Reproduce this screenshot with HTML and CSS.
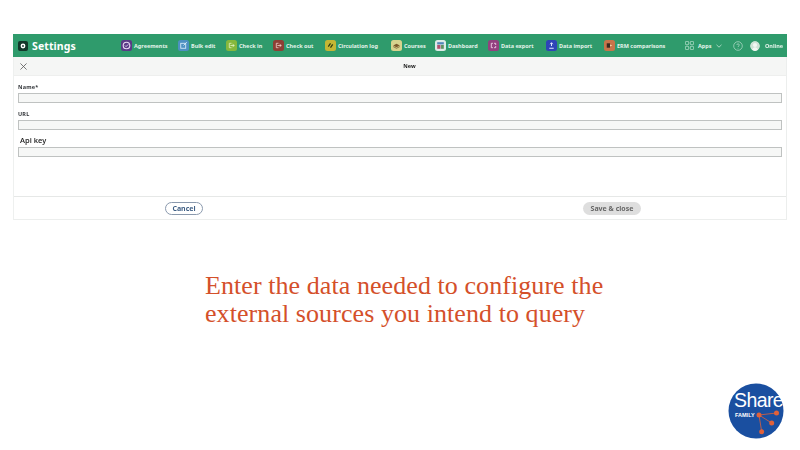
FILE: index.html
```html
<!DOCTYPE html>
<html lang="en">
<head>
<meta charset="utf-8">
<title>Settings</title>
<link rel="stylesheet" href="styles.css">
</head>
<body>
<main class="slide">
  <section class="app">
    <header class="topbar">
      <div class="brand">
        <span class="brand-icon"><svg viewBox="0 0 10 10" width="10" height="10"><circle cx="5" cy="5" r="2.4" fill="#fff"/><circle cx="5" cy="5" r="0.9" fill="#12372a"/></svg></span>
        <span class="brand-name">Settings</span>
      </div>
      <nav class="nav">
        <a class="nav-item w-agr"><span class="ico c-agr"><svg viewBox="0 0 10 10"><circle cx="5" cy="5" r="3" fill="none" stroke="#e9d9f5" stroke-width="1"/><path d="M3.6 5l1 1 2-2" fill="none" stroke="#e9d9f5" stroke-width=".8"/></svg></span>Agreements</a>
        <a class="nav-item w-bulk"><span class="ico c-bulk"><svg viewBox="0 0 10 10"><rect x="2.5" y="3" width="4.5" height="4.5" fill="none" stroke="#d8ecfa" stroke-width=".8"/><path d="M5 5l3-3" stroke="#d8ecfa" stroke-width=".8"/></svg></span>Bulk edit</a>
        <a class="nav-item w-in"><span class="ico c-in"><svg viewBox="0 0 10 10"><path d="M5 3H3v4h2M4 5h3.500M6 3.800L7.500 5 6 6.200" fill="none" stroke="#e8f5c8" stroke-width=".7"/></svg></span>Check in</a>
        <a class="nav-item w-out"><span class="ico c-out"><svg viewBox="0 0 10 10"><path d="M5 3H3v4h2M4 5h3.500M6 3.800L7.500 5 6 6.200" fill="none" stroke="#f5d8d0" stroke-width=".7"/></svg></span>Check out</a>
        <a class="nav-item w-circ"><span class="ico c-circ"><svg viewBox="0 0 10 10"><path d="M3 6l2-3M7 4L5 7" fill="none" stroke="#2d3a10" stroke-width="1.100"/></svg></span>Circulation log</a>
        <a class="nav-item w-cour"><span class="ico c-cour"><svg viewBox="0 0 10 10"><path d="M2 5l3-1.500L8 5 5 6.500z" fill="#7b5a2c"/><path d="M2 6l3 1.500L8 6" fill="none" stroke="#7b5a2c" stroke-width=".7"/></svg></span>Courses</a>
        <a class="nav-item w-dash"><span class="ico c-dash"><svg viewBox="0 0 10 10"><rect x="2" y="2" width="6" height="2" fill="#4f86b8"/><rect x="2" y="4.500" width="3" height="3.500" fill="#b0506e"/><rect x="5.500" y="4.500" width="2.500" height="3.500" fill="#5f8f5f"/></svg></span>Dashboard</a>
        <a class="nav-item w-exp"><span class="ico c-exp"><svg viewBox="0 0 10 10"><path d="M3 3h1.500M5.500 3H7v1.500M3 3v4h1.500M5.500 7H7V5.500" fill="none" stroke="#f2d5ea" stroke-width=".8"/></svg></span>Data export</a>
        <a class="nav-item w-imp"><span class="ico c-imp"><svg viewBox="0 0 10 10"><path d="M5 2.500v3M3.800 3.800L5 2.500l1.200 1.300M3 7.500h4" fill="none" stroke="#e3e8ff" stroke-width=".9"/></svg></span>Data import</a>
        <a class="nav-item w-erm"><span class="ico c-erm"><svg viewBox="0 0 10 10"><rect x="2.500" y="3" width="3" height="4" fill="#3c2a20"/><path d="M5.500 4l2 1-2 1z" fill="#f3d9a8"/></svg></span>ERM comparisons</a>
      </nav>
      <div class="tools">
        <span class="apps"><svg class="apps-grid" viewBox="0 0 11 11"><g fill="none" stroke="#d6efe2" stroke-width=".8"><rect x=".5" y=".5" width="4" height="4" rx="1"/><rect x="6.500" y=".5" width="4" height="4" rx="1"/><rect x=".5" y="6.500" width="4" height="4" rx="1"/><rect x="6.500" y="6.500" width="4" height="4" rx="1"/></g></svg>Apps<svg class="apps-caret" viewBox="0 0 6 4"><path d="M.5.800L3 3.200 5.500.800" fill="none" stroke="#d6efe2" stroke-width=".7"/></svg></span>
        <span class="help"><svg viewBox="0 0 10 10" width="10" height="10"><circle cx="5" cy="5" r="4.300" fill="none" stroke="#cfe9db" stroke-width=".6"/><path d="M3.800 4c0-1.600 2.500-1.600 2.500 0C6.300 5 5 5 5 6" fill="none" stroke="#cfe9db" stroke-width=".6"/><circle cx="5" cy="7.200" r=".4" fill="#cfe9db"/></svg></span>
        <span class="avatar"><svg viewBox="0 0 10 10" width="10" height="10"><circle cx="5" cy="5" r="5" fill="#cfe3d6"/><circle cx="5" cy="4" r="2.100" fill="#f3f7f3"/><path d="M2 10c0-5 6-5 6 0z" fill="#f3f7f3"/></svg></span>
        <span class="online">Online</span>
      </div>
    </header>
    <div class="subbar">
      <span class="close"><svg viewBox="0 0 8 8" width="7" height="7"><path d="M.5.500l7 7M7.500.500l-7 7" stroke="#555" stroke-width=".9"/></svg></span>
      <span class="subtitle">New</span>
    </div>
    <form class="form">
      <label class="label">Name*</label>
      <div class="input"></div>
      <label class="label label-url">URL</label>
      <div class="input"></div>
      <label class="label-api">Api key</label>
      <div class="input"></div>
    </form>
    <footer class="footer">
      <button class="btn btn-cancel" type="button">Cancel</button>
      <button class="btn btn-save" type="button">Save &amp; close</button>
    </footer>
  </section>
  <p class="caption">Enter the data needed to configure the<br>external sources you intend to query</p>
  <div class="logo">
    <svg viewBox="0 0 56 56" width="56" height="56">
      <circle cx="28" cy="28" r="27.500" fill="#1a4fa0"/>
      <g stroke="#e0613a" stroke-width=".8" fill="none"><path d="M31 32L48.500 30M31 32L43.700 40M31 32L33.700 48.700"/></g>
      <g fill="#e0613a"><circle cx="31" cy="32" r="2.500"/><circle cx="48.500" cy="30" r="2.500"/><circle cx="43.700" cy="40" r="2.500"/><circle cx="33.700" cy="48.700" r="2.500"/></g>
      <text class="logo-share" x="6" y="24">Share</text>
      <text class="logo-family" x="7" y="34">FAMILY</text>
    </svg>
  </div>
</main>
</body>
</html>
```

FILE: styles.css
```css
* { box-sizing: border-box; }
html, body { margin: 0; padding: 0; background: #fff; }
.slide { position: relative; width: 800px; height: 450px; padding: 34px 13px 0; overflow: hidden; font-family: "Noto Sans", sans-serif; }
.app { height: 186px; display: flex; flex-direction: column; border: 1px solid #eceeed; border-top: 0; border-left-color: #eef0ef; filter: blur(.4px); }
.topbar { height: 23px; margin: 0 -1px; flex: none; display: flex; align-items: center; background: #2f9b6c; color: #e3f3ea; font-weight: 700; font-size: 5.500px; padding-left: 5px; }
.brand { display: flex; align-items: center; width: 103px; flex: none; }
.brand-icon { width: 10px; height: 10px; border-radius: 2px; background: #12372a; display: flex; align-items: center; justify-content: center; margin-right: 4px; }
.brand-name { font-size: 10.500px; color: #fff; letter-spacing: .1px; }
.nav { display: flex; align-items: center; flex: none; }
.nav-item { display: flex; align-items: center; gap: 2px; white-space: nowrap; flex: none; }
.ico { width: 11px; height: 11px; border-radius: 2.500px; flex: none; display: block; }
.ico svg { display: block; width: 11px; height: 11px; }
.w-agr { width: 57px; } .w-bulk { width: 48px; } .w-in { width: 47px; } .w-out { width: 52px; } .w-circ { width: 66px; }
.w-cour { width: 44px; } .w-dash { width: 53px; } .w-exp { width: 58px; } .w-imp { width: 58px; } .w-erm { width: 81px; }
.c-agr { background: #5a3a86; } .c-bulk { background: #4d90c2; } .c-in { background: #86b83c; } .c-out { background: #8e3f35; }
.c-circ { background: #c4b634; } .c-cour { background: #d8d38e; } .c-dash { background: #dcebe8; } .c-exp { background: #93407f; }
.c-imp { background: #2e44b8; } .c-erm { background: #c8744a; }
.tools { display: flex; align-items: center; flex: none; }
.apps { display: flex; align-items: center; width: 48px; }
.apps-grid { width: 9px; height: 9px; margin-right: 4px; }
.apps-caret { width: 6px; height: 4px; margin-left: 4px; }
.help { display: flex; width: 17px; }
.avatar { display: flex; width: 15px; }
.avatar svg { border-radius: 50%; }
.subbar { height: 19px; flex: none; display: flex; align-items: center; background: #f5f6f5; border-bottom: 1px solid #eeefee; position: relative; padding-left: 6px; }
.close { display: flex; }
.subtitle { position: absolute; left: 19px; right: 0; text-align: center; font-size: 5.500px; font-weight: 700; color: #222; }
.form { flex: 1; padding: 7px 4px 0; display: flex; flex-direction: column; }
.label { font-size: 5.500px; line-height: 8px; font-weight: 700; color: #33363a; letter-spacing: .2px; height: 10px; }
.label-url { margin-top: 7px; }
.label-api { font-family: "Open Sans", sans-serif; font-size: 7.500px; line-height: 10px; font-weight: 600; color: #222; height: 12px; margin-top: 5px; padding-left: 2px; }
.input { height: 10px; background: #f6f7f6; border: 1px solid #bfc2c1; flex: none; }
.footer { height: 23px; flex: none; display: flex; align-items: center; justify-content: space-between; border-top: 1px solid #e6e8e7; padding: 0 145px 0 151px; }
.btn { height: 13px; padding: 0; border-radius: 7px; font-family: "Noto Sans", sans-serif; font-weight: 700; font-size: 7px; line-height: 11px; }
.btn-cancel { width: 38px; background: #fff; border: 1px solid #8a99ad; color: #3f5f85; }
.btn-save { width: 58px; background: #dedede; border: 0; color: #666; }
.caption { position: absolute; left: 205px; top: 272px; margin: 0; font-family: "Liberation Serif", serif; font-size: 26px; line-height: 28px; letter-spacing: .07px; color: #d4502a; white-space: nowrap; }
.logo { position: absolute; left: 728px; top: 383px; width: 56px; height: 56px; }
.logo-share { font-family: "Liberation Sans", sans-serif; font-size: 19.500px; fill: #fff; letter-spacing: -.6px; }
.logo-family { font-family: "Liberation Sans", sans-serif; font-size: 5.500px; font-weight: 700; fill: #fff; }
```
